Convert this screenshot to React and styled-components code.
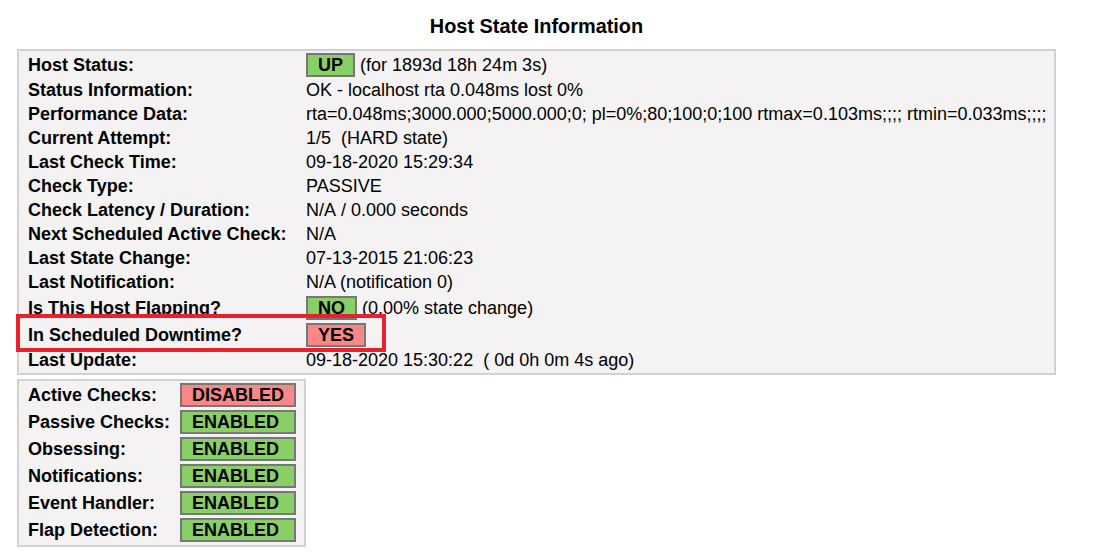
import React from 'react';
import styled, { createGlobalStyle } from 'styled-components';

const GlobalStyle = createGlobalStyle`
  body {
    margin: 0;
    background: #ffffff;
    font-family: "Liberation Sans", Arial, sans-serif;
    color: #000;
  }
`;

const hostRows = [
  { label: 'Host Status:', badge: 'UP', state: 'ok', text: ' (for 1893d 18h 24m 3s)' },
  { label: 'Status Information:', text: 'OK - localhost rta 0.048ms lost 0%' },
  {
    label: 'Performance Data:',
    text: 'rta=0.048ms;3000.000;5000.000;0; pl=0%;80;100;0;100 rtmax=0.103ms;;;; rtmin=0.033ms;;;;',
  },
  { label: 'Current Attempt:', text: '1/5\u00a0\u00a0(HARD state)' },
  { label: 'Last Check Time:', text: '09-18-2020 15:29:34' },
  { label: 'Check Type:', text: 'PASSIVE' },
  { label: 'Check Latency / Duration:', text: 'N/A\u00a0/ 0.000 seconds' },
  { label: 'Next Scheduled Active Check:', text: 'N/A' },
  { label: 'Last State Change:', text: '07-13-2015 21:06:23' },
  { label: 'Last Notification:', text: 'N/A (notification 0)' },
  { label: 'Is This Host Flapping?', badge: 'NO', state: 'ok', text: ' (0.00% state change)' },
  { label: 'In Scheduled Downtime?', badge: 'YES', state: 'bad', highlight: true },
  { label: 'Last Update:', text: '09-18-2020 15:30:22\u00a0\u00a0( 0d 0h 0m 4s ago)' },
];

const checkRows = [
  { label: 'Active Checks:', value: 'DISABLED', state: 'bad' },
  { label: 'Passive Checks:', value: 'ENABLED', state: 'ok' },
  { label: 'Obsessing:', value: 'ENABLED', state: 'ok' },
  { label: 'Notifications:', value: 'ENABLED', state: 'ok' },
  { label: 'Event Handler:', value: 'ENABLED', state: 'ok' },
  { label: 'Flap Detection:', value: 'ENABLED', state: 'ok' },
];

const pad = (s) => `\u00a0\u00a0${s}\u00a0\u00a0`;

export default function App() {
  return (
    <>
      <GlobalStyle />
      <Page>
        <Title>Host State Information</Title>
        <InfoBox>
          {hostRows.map((row) => (
            <InfoRow key={row.label} tall={!!row.badge}>
              <Label>{row.label}</Label>
              <Value>
                {row.badge && <Badge state={row.state}>{pad(row.badge)}</Badge>}
                {row.text}
              </Value>
              {row.highlight && <Highlight />}
            </InfoRow>
          ))}
        </InfoBox>
        <ChecksBox>
          {checkRows.map((row) => (
            <CheckRow key={row.label}>
              <Label>{row.label}</Label>
              <CheckBadge state={row.state}>{pad(row.value)}</CheckBadge>
            </CheckRow>
          ))}
        </ChecksBox>
      </Page>
    </>
  );
}

const Page = styled.div`
  display: inline-flex;
  flex-direction: column;
  align-items: center;
  margin-left: 17px;
  padding-top: 14px;
`;

const Title = styled.div`
  font-size: 19.9px;
  font-weight: bold;
  line-height: 24px;
  margin-bottom: 11px;
`;

const InfoBox = styled.div`
  width: 1039px;
  box-sizing: border-box;
  border: 2px solid #d1d1d1;
  background: #f4f2f3;
  padding: 0 9px 1px;
`;

const InfoRow = styled.div`
  position: relative;
  display: grid;
  grid-template-columns: 278px 1fr;
  align-items: center;
  height: ${(p) => (p.tall ? '27px' : '24px')};
  font-size: 18px;
  line-height: 24px;
  white-space: nowrap;
`;

const Label = styled.div`
  font-weight: bold;
`;

const Value = styled.div`
  display: flex;
  align-items: center;
  white-space: pre;
`;

const Badge = styled.span`
  display: inline-block;
  box-sizing: border-box;
  height: 24px;
  line-height: 20px;
  border: 2px solid #777777;
  font-weight: bold;
  background: ${(p) => (p.state === 'bad' ? '#f88888' : '#88d066')};
`;

const Highlight = styled.div`
  position: absolute;
  left: -12px;
  top: -7px;
  width: 370px;
  height: 38px;
  box-sizing: border-box;
  border: 4px solid #e8212b;
  pointer-events: none;
`;

const ChecksBox = styled.div`
  align-self: flex-start;
  margin-top: 4px;
  box-sizing: border-box;
  border: 2px solid #d1d1d1;
  background: #f4f2f3;
  padding: 0 8px 2px 9px;
`;

const CheckRow = styled.div`
  display: grid;
  grid-template-columns: 152px 116px;
  align-items: center;
  height: 27px;
  font-size: 18px;
  line-height: 24px;
  white-space: nowrap;
`;

const CheckBadge = styled(Badge)`
  display: block;
`;
